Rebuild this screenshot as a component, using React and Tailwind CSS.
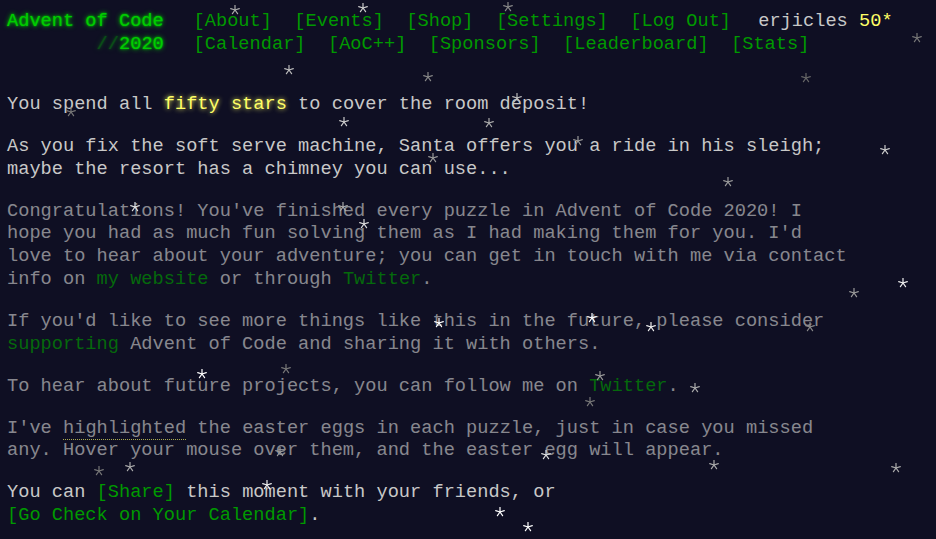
import React from "react";

const stars = [
  [235, 10, "#aaaaaa"], [363, 8, "#cccccc"], [508, 7, "#888888"], [917, 38, "#777777"],
  [289, 70, "#bbbbbb"], [428, 77, "#888888"], [806, 78, "#666666"], [71, 112, "#777777"],
  [344, 122, "#cccccc"], [517, 98, "#bbbbbb"], [489, 123, "#aaaaaa"], [578, 141, "#999999"],
  [885, 150, "#cccccc"], [433, 158, "#999999"], [728, 182, "#999999"], [135, 207, "#dddddd"],
  [343, 207, "#aaaaaa"], [364, 224, "#dddddd"], [903, 283, "#eeeeee"], [854, 293, "#999999"],
  [439, 323, "#ffffff"], [592, 318, "#ffffff"], [651, 327, "#eeeeee"], [810, 327, "#888888"],
  [202, 374, "#ffffff"], [286, 369, "#777777"], [600, 376, "#999999"], [695, 388, "#aaaaaa"],
  [590, 402, "#777777"], [280, 452, "#999999"], [546, 455, "#dddddd"], [714, 465, "#aaaaaa"],
  [896, 468, "#aaaaaa"], [99, 471, "#777777"], [130, 467, "#aaaaaa"], [267, 485, "#eeeeee"],
  [500, 512, "#ffffff"], [528, 527, "#ffffff"],
];

const topNav = ["About", "Events", "Shop", "Settings", "Log Out"];
const eventNav = ["Calendar", "AoC++", "Sponsors", "Leaderboard", "Stats"];

const Star = ({ x, y, color }) => (
  <svg
    width="10"
    height="10"
    viewBox="-5 -5 10 10"
    className="absolute"
    style={{ left: x - 5, top: y - 5, color }}
  >
    <g stroke="currentColor" strokeWidth="1.2" strokeLinecap="round">
      <line x1="0" y1="0" x2="0" y2="-4.5" />
      <line x1="0" y1="0" x2="4.3" y2="-1.4" />
      <line x1="0" y1="0" x2="2.6" y2="3.7" />
      <line x1="0" y1="0" x2="-2.6" y2="3.7" />
      <line x1="0" y1="0" x2="-4.3" y2="-1.4" />
    </g>
  </svg>
);

const Link = ({ children, className = "" }) => (
  <a className={"text-[#009900] " + className}>{children}</a>
);

const App = () => {
  return (
    <div className="relative min-h-screen overflow-hidden bg-[#0f0f23] pl-[7px] pt-[10px] font-['Liberation_Mono','DejaVu_Sans_Mono',monospace] text-[18.67px] leading-[23px] text-[#c8c8c8]">
      <header>
        <div className="flex">
          <h1 className="w-[14ch] box-content pr-[1em] text-[#00cc00] [text-shadow:0_0_2px_#00cc00,0_0_5px_#00cc00]">
            Advent of Code
          </h1>
          <ul className="flex">
            {topNav.map((item) => (
              <li key={item} className="px-[0.6em]">
                <Link>[{item}]</Link>
              </li>
            ))}
          </ul>
          <div className="pl-[16px]">
            erjicles <span className="text-[#ffff66]">50*</span>
          </div>
        </div>
        <div className="flex">
          <h1 className="w-[14ch] box-content whitespace-pre pr-[1em] text-[#00cc00] [text-shadow:0_0_2px_#00cc00,0_0_5px_#00cc00]">
            {"        "}
            <span className="opacity-[0.33]">//</span>
            2020
          </h1>
          <ul className="flex">
            {eventNav.map((item) => (
              <li key={item} className="px-[0.6em]">
                <Link>[{item}]</Link>
              </li>
            ))}
          </ul>
        </div>
      </header>

      <main className="mt-[37px] flex w-[845px] flex-col gap-[19.3px] leading-[22.7px]">
        <p>
          You spend all{" "}
          <em className="not-italic text-[#ffff66] [text-shadow:0_0_5px_#ffff66]">fifty stars</em> to
          cover the room deposit!
        </p>
        <p>
          As you fix the soft serve machine, Santa offers you a ride in his sleigh;
          maybe the resort has a chimney you can use...
        </p>
        <div className="flex flex-col gap-[19.3px] opacity-[0.65]">
          <p>
            Congratulations! You've finished every puzzle in Advent of Code 2020! I
            hope you had as much fun solving them as I had making them for you. I'd
            love to hear about your adventure; you can get in touch with me via contact
            info on <Link>my website</Link> or through <Link>Twitter</Link>.
          </p>
          <p>
            If you'd like to see more things like this in the future, please consider{" "}
            <Link>supporting</Link> Advent of Code and sharing it with others.
          </p>
          <p>
            To hear about future projects, you can follow me on <Link>Twitter</Link>.
          </p>
          <p>
            I've{" "}
            <span className="border-b border-dotted border-[#ffff66]">highlighted</span> the
            easter eggs in each puzzle, just in case you missed any. Hover your mouse
            over them, and the easter egg will appear.
          </p>
        </div>
        <p>
          You can <Link className="whitespace-nowrap">[Share]</Link> this moment with your friends, or{" "}
          <Link className="inline-block whitespace-nowrap">[Go Check on Your Calendar]</Link>.
        </p>
      </main>

      <div className="pointer-events-none absolute inset-0">
        {stars.map(([x, y, color], i) => (
          <Star key={i} x={x} y={y} color={color} />
        ))}
      </div>
    </div>
  );
};

export default App;
